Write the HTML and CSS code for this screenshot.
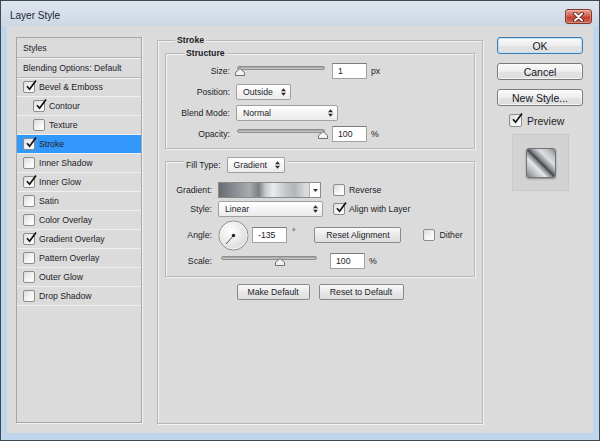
FILE: index.html
```html
<!DOCTYPE html>
<html lang="en">
<head>
<meta charset="utf-8">
<title>Layer Style</title>
<link rel="stylesheet" href="styles.css">
</head>
<body>
<div class="window">
  <div class="titlebar">
    <span class="title">Layer Style</span>
    <span class="close">
      <svg width="13" height="10" viewBox="0 0 13 10"><path d="M3 1.5 L10 8.5 M10 1.5 L3 8.5" stroke="#5a1f18" stroke-width="3.8" stroke-linecap="round"/><path d="M3 1.5 L10 8.5 M10 1.5 L3 8.5" stroke="#ffffff" stroke-width="2" stroke-linecap="round"/></svg>
    </span>
  </div>
  <div class="client">
    <div class="styles-list">
      <div class="row head head-top">Styles</div>
      <div class="row head">Blending Options: Default</div>
      <div class="row"><span class="cb"><svg class="tick" viewBox="0 0 14 14"><path d="M3 7.2 L5.6 10.2 L12 1.5" /></svg></span>Bevel &amp; Emboss</div>
      <div class="row sub"><span class="cb"><svg class="tick" viewBox="0 0 14 14"><path d="M3 7.2 L5.6 10.2 L12 1.5" /></svg></span>Contour</div>
      <div class="row sub"><span class="cb"></span>Texture</div>
      <div class="row selected"><span class="cb"><svg class="tick" viewBox="0 0 14 14"><path d="M3 7.2 L5.6 10.2 L12 1.5" /></svg></span>Stroke</div>
      <div class="row"><span class="cb"></span>Inner Shadow</div>
      <div class="row"><span class="cb"><svg class="tick" viewBox="0 0 14 14"><path d="M3 7.2 L5.6 10.2 L12 1.5" /></svg></span>Inner Glow</div>
      <div class="row"><span class="cb"></span>Satin</div>
      <div class="row"><span class="cb"></span>Color Overlay</div>
      <div class="row"><span class="cb"><svg class="tick" viewBox="0 0 14 14"><path d="M3 7.2 L5.6 10.2 L12 1.5" /></svg></span>Gradient Overlay</div>
      <div class="row"><span class="cb"></span>Pattern Overlay</div>
      <div class="row"><span class="cb"></span>Outer Glow</div>
      <div class="row"><span class="cb"></span>Drop Shadow</div>
    </div>

    <fieldset class="group outer">
      <legend class="legend legend-outer">Stroke</legend>

      <fieldset class="group structure">
        <legend class="legend legend-inner">Structure</legend>
        <div class="form structure-form">
          <span class="label">Size:</span>
          <div class="ctrl">
            <div class="slider slider-88"><div class="track"></div><svg class="thumb" style="left:-2px" viewBox="0 0 10 8"><path d="M5 0.5 L9.5 4.5 V7.5 H0.5 V4.5 Z"/></svg></div>
            <span class="field field-gap">1</span><span class="unit">px</span>
          </div>
          <span class="label">Position:</span>
          <div class="ctrl">
            <span class="select sel-position">Outside<svg class="ud" width="5" height="8" viewBox="0 0 5 8"><path d="M0 3.2 2.5 0.2 5 3.2Z M0 4.8 2.5 7.8 5 4.8Z"/></svg></span>
          </div>
          <span class="label">Blend Mode:</span>
          <div class="ctrl">
            <span class="select sel-blend">Normal<svg class="ud" width="5" height="8" viewBox="0 0 5 8"><path d="M0 3.2 2.5 0.2 5 3.2Z M0 4.8 2.5 7.8 5 4.8Z"/></svg></span>
          </div>
          <span class="label">Opacity:</span>
          <div class="ctrl">
            <div class="slider slider-88"><div class="track"></div><svg class="thumb" style="left:81px" viewBox="0 0 10 8"><path d="M5 0.5 L9.5 4.5 V7.5 H0.5 V4.5 Z"/></svg></div>
            <span class="field field-gap">100</span><span class="unit">%</span>
          </div>
        </div>
      </fieldset>

      <fieldset class="group fill">
        <legend class="legend legend-inner legend-fill">
          <span class="legend-text">Fill Type:</span>
          <span class="select sel-fill">Gradient<svg class="ud" width="5" height="8" viewBox="0 0 5 8"><path d="M0 3.2 2.5 0.2 5 3.2Z M0 4.8 2.5 7.8 5 4.8Z"/></svg></span>
        </legend>
        <div class="form fill-form">
          <span class="label">Gradient:</span>
          <div class="grad">
            <span class="grad-fill"></span>
            <span class="grad-drop"><svg width="5" height="3" viewBox="0 0 5 3"><path d="M0 0H5L2.5 3Z" fill="#333"/></svg></span>
          </div>
          <label class="check"><span class="cb"></span>Reverse</label>

          <span class="label">Style:</span>
          <span class="select sel-style">Linear<svg class="ud" width="5" height="8" viewBox="0 0 5 8"><path d="M0 3.2 2.5 0.2 5 3.2Z M0 4.8 2.5 7.8 5 4.8Z"/></svg></span>
          <label class="check"><span class="cb"><svg class="tick" viewBox="0 0 14 14"><path d="M3 7.2 L5.6 10.2 L12 1.5" /></svg></span>Align with Layer</label>

          <span class="label">Angle:</span>
          <div class="ctrl span2">
            <svg class="dial" width="31" height="31" viewBox="0 0 31 31">
              <defs><radialGradient id="dg" cx="40%" cy="35%" r="70%"><stop offset="0" stop-color="#ffffff"/><stop offset="1" stop-color="#d9d9d9"/></radialGradient></defs>
              <circle cx="15.5" cy="15.5" r="14.5" fill="url(#dg)" stroke="#8a8a8a"/>
              <circle cx="15.5" cy="15.5" r="13.5" fill="none" stroke="#f8f8f8" stroke-width="0.8"/>
              <line x1="15.5" y1="15.5" x2="8" y2="24" stroke="#555" stroke-width="1"/>
              <circle cx="15.5" cy="15.5" r="1.7" fill="#222"/>
            </svg>
            <span class="field angle-field">-135</span>
            <span class="degree">°</span>
            <span class="btn btn-align">Reset Alignment</span>
            <label class="check dither"><span class="cb"></span>Dither</label>
          </div>

          <span class="label">Scale:</span>
          <div class="ctrl span2">
            <div class="slider slider-96"><div class="track"></div><svg class="thumb" style="left:54px" viewBox="0 0 10 8"><path d="M5 0.5 L9.5 4.5 V7.5 H0.5 V4.5 Z"/></svg></div>
            <span class="field scale-field">100</span><span class="unit">%</span>
          </div>
        </div>
      </fieldset>

      <div class="defaults">
        <span class="btn btn-make">Make Default</span>
        <span class="btn btn-reset">Reset to Default</span>
      </div>
    </fieldset>

    <div class="side">
      <span class="sbtn sbtn-default">OK</span>
      <span class="sbtn">Cancel</span>
      <span class="sbtn">New Style...</span>
      <label class="preview"><span class="cb cb-lg"><svg class="tick" viewBox="0 0 14 14"><path d="M3 7.2 L5.6 10.2 L12 1.5" /></svg></span>Preview</label>
      <div class="thumbbox"><span class="swatch"></span></div>
    </div>
  </div>
</div>
</body>
</html>
```
FILE: styles.css
```css
* { box-sizing: border-box; }
html, body { margin: 0; padding: 0; }
body {
  width: 600px;
  height: 441px;
  overflow: hidden;
  font-family: "Liberation Sans", Arial, sans-serif;
  font-size: 8.7px;
  color: #1c1c28;
  background: #bdd5ec;
}

.window {
  width: 600px;
  height: 441px;
  border: 1px solid #3e4852;
  background: #bed5ec;
  display: flex;
  flex-direction: column;
}

.titlebar {
  flex: none;
  height: 25px;
  display: flex;
  align-items: flex-start;
  background: linear-gradient(#dde5ee, #cdd8e4);
}
.title {
  padding: 8px 0 0 9px;
  font-size: 10px;
  line-height: 14px;
  color: #1a2230;
}
.close {
  margin: 8px 7px 0 auto;
  width: 27px;
  height: 15px;
  border: 1px solid #86342a;
  border-radius: 3px;
  background: linear-gradient(#eaa495, #d2604f 45%, #c2402f 55%, #cf6a55);
  display: flex;
  align-items: center;
  justify-content: center;
  box-shadow: inset 0 0 0 1px rgba(255,255,255,0.25);
}

.client {
  flex: 1;
  margin: 0 6px 7px;
  background: #dbdbdb;
  display: flex;
  align-items: flex-start;
  padding: 8px 0 0 9px;
}

/* ---------- styles list ---------- */
.styles-list {
  flex: none;
  width: 126px;
  height: 386px;
  margin-top: 3px;
  border: 1px solid #a6a6a6;
  box-shadow: 1px 1px 0 #f2f2f2;
  display: flex;
  flex-direction: column;
}
.row {
  flex: none;
  height: 19px;
  display: flex;
  align-items: center;
  padding-left: 6px;
  border-bottom: 1px solid #efefef;
  white-space: nowrap;
}
.row.head {
  height: 20px;
  padding-left: 6px;
  border-bottom: 1px solid #b5b5b5;
  box-shadow: 0 1px 0 #f0f0f0;
}
.row.sub { padding-left: 16px; }
.row.selected { background: #3398fc; }

.cb {
  position: relative;
  flex: none;
  width: 12px;
  height: 12px;
  margin-right: 4px;
  border: 1px solid #8b8c8c;
  border-radius: 2px;
  background: linear-gradient(135deg, #dcdcdc, #f6f6f6 60%, #ffffff);
}
.cb-lg { width: 13px; height: 13px; }
.tick {
  position: absolute;
  left: 0;
  top: -3px;
  width: 14px;
  height: 14px;
  fill: none;
  stroke: #111;
  stroke-width: 1.7;
}

/* ---------- group boxes ---------- */
.group {
  margin: 0;
  min-width: 0;
  border: 1px solid #b7b7b7;
  box-shadow: inset 1px 1px 0 #f3f3f3, 1px 1px 0 #f3f3f3;
}
.legend {
  padding: 0 2px;
  font-weight: bold;
  line-height: 12px;
  background: #dbdbdb;
}
.legend-outer { margin-left: 10px; }
.legend-inner { margin-left: 18px; }

.outer {
  flex: none;
  width: 326px;
  height: 390px;
  margin-left: 15px;
  padding: 1px 7px 0;
}
.structure {
  width: 310px;
  padding: 4px 0 6px;
}
.fill {
  width: 310px;
  margin-top: 8px;
  padding: 16px 0 7px;
}
.legend-fill {
  height: 9px;
  display: flex;
  align-items: flex-start;
  font-weight: normal;
  padding-right: 2px;
}
.legend-text { line-height: 16px; margin-right: 6px; }

/* ---------- forms ---------- */
.form {
  display: grid;
  align-items: center;
  column-gap: 6px;
}
.structure-form {
  grid-template-columns: 64px auto;
  row-gap: 5px;
}
.fill-form {
  grid-template-columns: 46px 105px 1fr;
  grid-template-rows: 16px 16px 30px 16px;
  row-gap: 3px;
}
.label { text-align: right; line-height: 16px; white-space: nowrap; }
.ctrl { display: flex; align-items: center; height: 16px; }
.span2 { grid-column: 2 / 4; }
.fill-form .span2:nth-of-type(1) { height: 30px; }

.slider {
  position: relative;
  flex: none;
  height: 16px;
  padding-top: 3px;
}
.slider-88 { width: 88px; margin-left: 1px; }
.slider-96 { width: 96px; margin-left: 3px; }
.track {
  height: 4px;
  border: 1px solid #8d8d8d;
  border-radius: 2px;
  background: linear-gradient(#9d9d9d, #cfcfcf);
}
.thumb {
  position: absolute;
  top: 5px;
  width: 10px;
  height: 8px;
  fill: #f4f4f4;
  stroke: #6f6f6f;
  stroke-width: 1;
}

.field {
  flex: none;
  width: 35px;
  height: 16px;
  padding-left: 5px;
  display: flex;
  align-items: center;
  background: #ffffff;
  border: 1px solid #a2a2a2;
  border-top-color: #7c7c7c;
}
.field-gap { margin-left: 7px; }
.unit { margin-left: 4px; }

.select {
  flex: none;
  height: 16px;
  display: flex;
  align-items: center;
  padding: 0 4px 0 6px;
  border: 1px solid #a0a0a0;
  border-radius: 2px;
  background: linear-gradient(#ffffff, #ebebeb);
  white-space: nowrap;
}
.ud { margin-left: auto; fill: #2a2a2a; }
.sel-position { width: 55px; }
.sel-blend { width: 102px; }
.sel-fill { width: 58px; }
.sel-style { width: 105px; }

.grad {
  width: 103px;
  height: 16px;
  display: flex;
  border: 1px solid #8a8a8a;
  background: #fff;
}
.grad-fill {
  flex: 1;
  background: linear-gradient(to right, #686b70 0%, #8b8e92 18%, #a9acaf 34%, #7b7e82 44%, #c9ccce 52%, #e9ebed 60%, #c4c7ca 74%, #b3b6b9 84%, #d9dcde 96%);
}
.grad-drop {
  width: 11px;
  display: flex;
  align-items: center;
  justify-content: center;
  border-left: 1px solid #b4b4b4;
  background: #fdfdfd;
}

.check {
  display: flex;
  align-items: center;
  margin-left: 4px;
  white-space: nowrap;
}

.dial { flex: none; margin-left: 0; }
.angle-field { margin-left: 3px; }
.degree { margin-left: 5px; margin-top: -6px; }
.btn {
  flex: none;
  height: 16px;
  display: flex;
  align-items: center;
  justify-content: center;
  border: 1px solid #8a8a8a;
  border-radius: 2px;
  background: linear-gradient(#fbfbfb, #e7e7e7 55%, #dedede);
  white-space: nowrap;
}
.btn-align { width: 87px; margin-left: 19px; }
.dither { margin-left: 22px; }
.scale-field { margin-left: 13px; }

.defaults {
  display: flex;
  justify-content: center;
  gap: 9px;
  margin-top: 7px;
}
.btn-make { width: 73px; }
.btn-reset { width: 85px; }

/* ---------- side column ---------- */
.side {
  flex: none;
  width: 86px;
  margin-left: 14px;
  margin-top: 3px;
  display: flex;
  flex-direction: column;
  font-size: 10.5px;
}
.sbtn {
  height: 17px;
  margin-bottom: 9px;
  display: flex;
  align-items: center;
  justify-content: center;
  border: 1px solid #7a7a7a;
  border-radius: 3px;
  background: linear-gradient(#fafafa, #eeeeee 50%, #e3e3e3 51%, #dedede);
  box-shadow: inset 0 0 0 1px rgba(255,255,255,0.7);
  color: #15151f;
}
.sbtn-default {
  border-color: #3b7cb2;
  box-shadow: inset 0 0 0 1px #bfe2f8;
}
.preview {
  display: flex;
  align-items: center;
  height: 13px;
  margin: -1px 0 0 12px;
}
.preview .cb { margin-right: 5px; }
.thumbbox {
  width: 57px;
  height: 57px;
  margin: 7px 0 0 15px;
  display: flex;
  align-items: center;
  justify-content: center;
  background: #d3d3d3;
  border: 1px solid #c9c9c9;
}
.swatch {
  width: 30px;
  height: 30px;
  border-radius: 3px;
  border: 1px solid #707378;
  box-shadow: 0 1px 2px rgba(0,0,0,0.35);
  background: linear-gradient(45deg, #75797d 0%, #b9bcbf 18%, #e4e6e8 34%, #8f9296 44%, #45484d 50%, #8c8f93 57%, #dcdee0 70%, #bfc2c5 84%, #7f8286 100%);
}
```
